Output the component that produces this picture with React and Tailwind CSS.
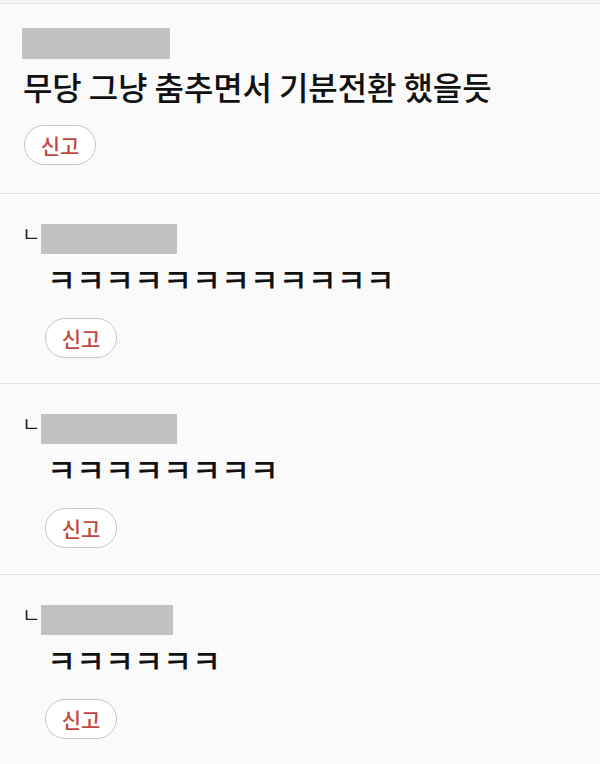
import React from "react";

const font = { fontFamily: '"Noto Sans CJK KR", "Noto Sans", sans-serif' };

const ReportButton = () => (
  <button className="w-[72px] h-[40px] rounded-full border-[1.5px] border-[#c6c6c6] bg-white text-[21px] font-medium text-[#c0493f] leading-none flex items-center justify-center">
    신고
  </button>
);

const replies = [
  { id: 1, boxW: "w-[136px]", h: "h-[190px]", text: "ㅋㅋㅋㅋㅋㅋㅋㅋㅋㅋㅋㅋ" },
  { id: 2, boxW: "w-[136px]", h: "h-[191px]", text: "ㅋㅋㅋㅋㅋㅋㅋㅋ" },
  { id: 3, boxW: "w-[132px]", h: "h-[190px]", text: "ㅋㅋㅋㅋㅋㅋ" },
];

const App = () => {
  return (
    <div className="w-[600px] h-[764px] overflow-hidden bg-[#fafafa]" style={font}>
      <div className="h-[3px] bg-[#f4f4f4]" />
      {/* original comment */}
      <div className="border-t border-[#e2e2e2] h-[191px] border-b px-[22px] pt-[24px]">
        <div className="w-[148px] h-[31px] bg-[#c2c2c2]" />
        <p className="mt-[5px] ml-[1px] text-[32px] font-medium leading-[44px] text-[#111] tracking-[-0.1px] whitespace-nowrap">
          무당 그냥 춤추면서 기분전환 했을듯
        </p>
        <div className="mt-[17px] ml-[2px]">
          <ReportButton />
        </div>
      </div>

      {replies.map((r) => (
        <div key={r.id} className={`${r.h} border-b border-[#e2e2e2] pl-[22px] pt-[30px]`}>
          <div className="flex items-start">
            <span className="w-[19px] text-[20px] leading-none text-[#222]">ㄴ</span>
            <div className={`${r.boxW} h-[30px] bg-[#c2c2c2]`} />
          </div>
          <div className="ml-[25px] mt-[3px] text-[31.5px] font-medium leading-[42px] text-[#111] whitespace-nowrap">
            {r.text}
          </div>
          <div className="ml-[23px] mt-[19px]">
            <ReportButton />
          </div>
        </div>
      ))}
    </div>
  );
};

export default App;
